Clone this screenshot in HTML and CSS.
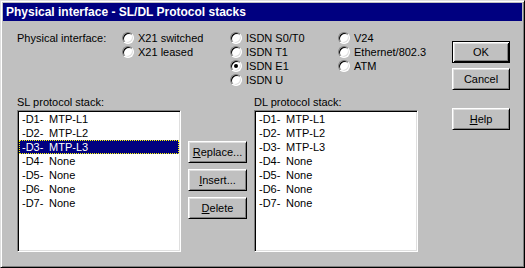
FILE: index.html
```html
<!DOCTYPE html>
<html lang="en">
<head>
  <meta charset="UTF-8" />
  <title>Physical interface - SL/DL Protocol stacks</title>
  <link rel="stylesheet" href="styles.css">
</head>
<body>

  <div class="window">
    <div class="titlebar">Physical interface - SL/DL Protocol stacks</div>

    <div class="dialog">
      <div class="main">

        <div class="iface">
          <span class="iface-label">Physical interface:</span>
          <div class="radio-col">
            <label class="radio"><span class="dot"></span>X21 switched</label>
            <label class="radio"><span class="dot"></span>X21 leased</label>
          </div>
          <div class="radio-col">
            <label class="radio"><span class="dot"></span>ISDN S0/T0</label>
            <label class="radio"><span class="dot"></span>ISDN T1</label>
            <label class="radio"><span class="dot checked"></span>ISDN E1</label>
            <label class="radio"><span class="dot"></span>ISDN U</label>
          </div>
          <div class="radio-col">
            <label class="radio"><span class="dot"></span>V24</label>
            <label class="radio"><span class="dot"></span>Ethernet/802.3</label>
            <label class="radio"><span class="dot"></span>ATM</label>
          </div>
        </div>

        <div class="stacks">
          <div class="stack">
            <div class="stack-label">SL protocol stack:</div>
            <ul class="listbox">
              <li><span class="code">-D1-</span>MTP-L1</li>
              <li><span class="code">-D2-</span>MTP-L2</li>
              <li class="selected"><span class="code">-D3-</span>MTP-L3</li>
              <li><span class="code">-D4-</span>None</li>
              <li><span class="code">-D5-</span>None</li>
              <li><span class="code">-D6-</span>None</li>
              <li><span class="code">-D7-</span>None</li>
            </ul>
          </div>

          <div class="edit-buttons">
            <button class="btn"><u>R</u>eplace...</button>
            <button class="btn"><u>I</u>nsert...</button>
            <button class="btn"><u>D</u>elete</button>
          </div>

          <div class="stack">
            <div class="stack-label">DL protocol stack:</div>
            <ul class="listbox">
              <li><span class="code">-D1-</span>MTP-L1</li>
              <li><span class="code">-D2-</span>MTP-L2</li>
              <li><span class="code">-D3-</span>MTP-L3</li>
              <li><span class="code">-D4-</span>None</li>
              <li><span class="code">-D5-</span>None</li>
              <li><span class="code">-D6-</span>None</li>
              <li><span class="code">-D7-</span>None</li>
            </ul>
          </div>
        </div>

      </div>

      <div class="dialog-buttons">
        <button class="btn default">OK</button>
        <button class="btn">Cancel</button>
        <button class="btn help"><u>H</u>elp</button>
      </div>
    </div>
  </div>

</body>
</html>
```

FILE: styles.css
```css
* {
  box-sizing: border-box;
  margin: 0;
  padding: 0;
}

body {
  font-family: 'Liberation Sans', Arial, sans-serif;
  font-size: 11px;
  color: #000;
  background: #c0c0c0;
}

.window {
  width: 525px;
  height: 268px;
  background: #c0c0c0;
  border: 1px solid;
  border-color: #dfdfdf #000 #000 #dfdfdf;
  box-shadow: inset 1px 1px #fff, inset -1px -1px #808080;
  padding: 2px;
  display: flex;
  flex-direction: column;
}

.titlebar {
  height: 18px;
  background: #000080;
  color: #fff;
  font-weight: bold;
  font-size: 12px;
  line-height: 18px;
  padding-left: 3px;
  white-space: nowrap;
}

.dialog {
  display: flex;
  padding: 10px 0 0 14px;
}

.main {
  width: 401px;
  flex-shrink: 0;
}

/* physical interface radios */
.iface {
  display: flex;
}

.iface-label {
  flex: 0 0 105px;
  line-height: 14px;
}

.radio-col {
  flex: 0 0 108px;
  display: flex;
  flex-direction: column;
}

.radio {
  display: flex;
  align-items: center;
  height: 14px;
  white-space: nowrap;
}

.dot {
  flex: 0 0 12px;
  height: 12px;
  margin-right: 4px;
  border-radius: 50%;
  border: 1px solid;
  border-color: #808080 #fff #fff #808080;
  box-shadow: inset 1px 1px #000, inset -1px -1px #dfdfdf;
  background: #fff;
  display: flex;
  align-items: center;
  justify-content: center;
}

.dot.checked::after {
  content: '';
  width: 4px;
  height: 4px;
  border-radius: 50%;
  background: #000;
}

/* protocol stacks */
.stacks {
  display: flex;
  margin-top: 8px;
}

.stack {
  flex: 0 0 164px;
}

.stack-label {
  line-height: 14px;
  margin-bottom: 1px;
}

.listbox {
  list-style: none;
  height: 142px;
  background: #fff;
  border: 1px solid;
  border-color: #808080 #fff #fff #808080;
  box-shadow: inset 1px 1px #000, inset -1px -1px #dfdfdf;
  padding: 1px;
}

.listbox li {
  height: 14px;
  line-height: 14px;
  padding-left: 3px;
  white-space: nowrap;
}

.listbox .code {
  display: inline-block;
  width: 27px;
}

.listbox li.selected {
  background: #000080;
  color: #fff;
  border: 1px dotted #ffff00;
  line-height: 12px;
  padding-left: 2px;
}

.edit-buttons {
  flex: 0 0 59px;
  display: flex;
  flex-direction: column;
  gap: 6px;
  margin: 46px 7px 0 7px;
}

/* buttons */
.btn {
  font-family: inherit;
  font-size: 11px;
  color: #000;
  height: 22px;
  width: 100%;
  background: #c0c0c0;
  border: 1px solid;
  border-color: #fff #000 #000 #fff;
  box-shadow: inset 1px 1px #dfdfdf, inset -1px -1px #808080;
  cursor: pointer;
}

.btn.default {
  border: 1px solid #000;
  box-shadow: inset 1px 1px #fff, inset -1px -1px #000, inset 2px 2px #dfdfdf, inset -2px -2px #808080;
}

.dialog-buttons {
  flex: 0 0 58px;
  margin: 10px 0 0 34px;
  display: flex;
  flex-direction: column;
  gap: 5px;
}

.dialog-buttons .help {
  margin-top: 13px;
}
```
